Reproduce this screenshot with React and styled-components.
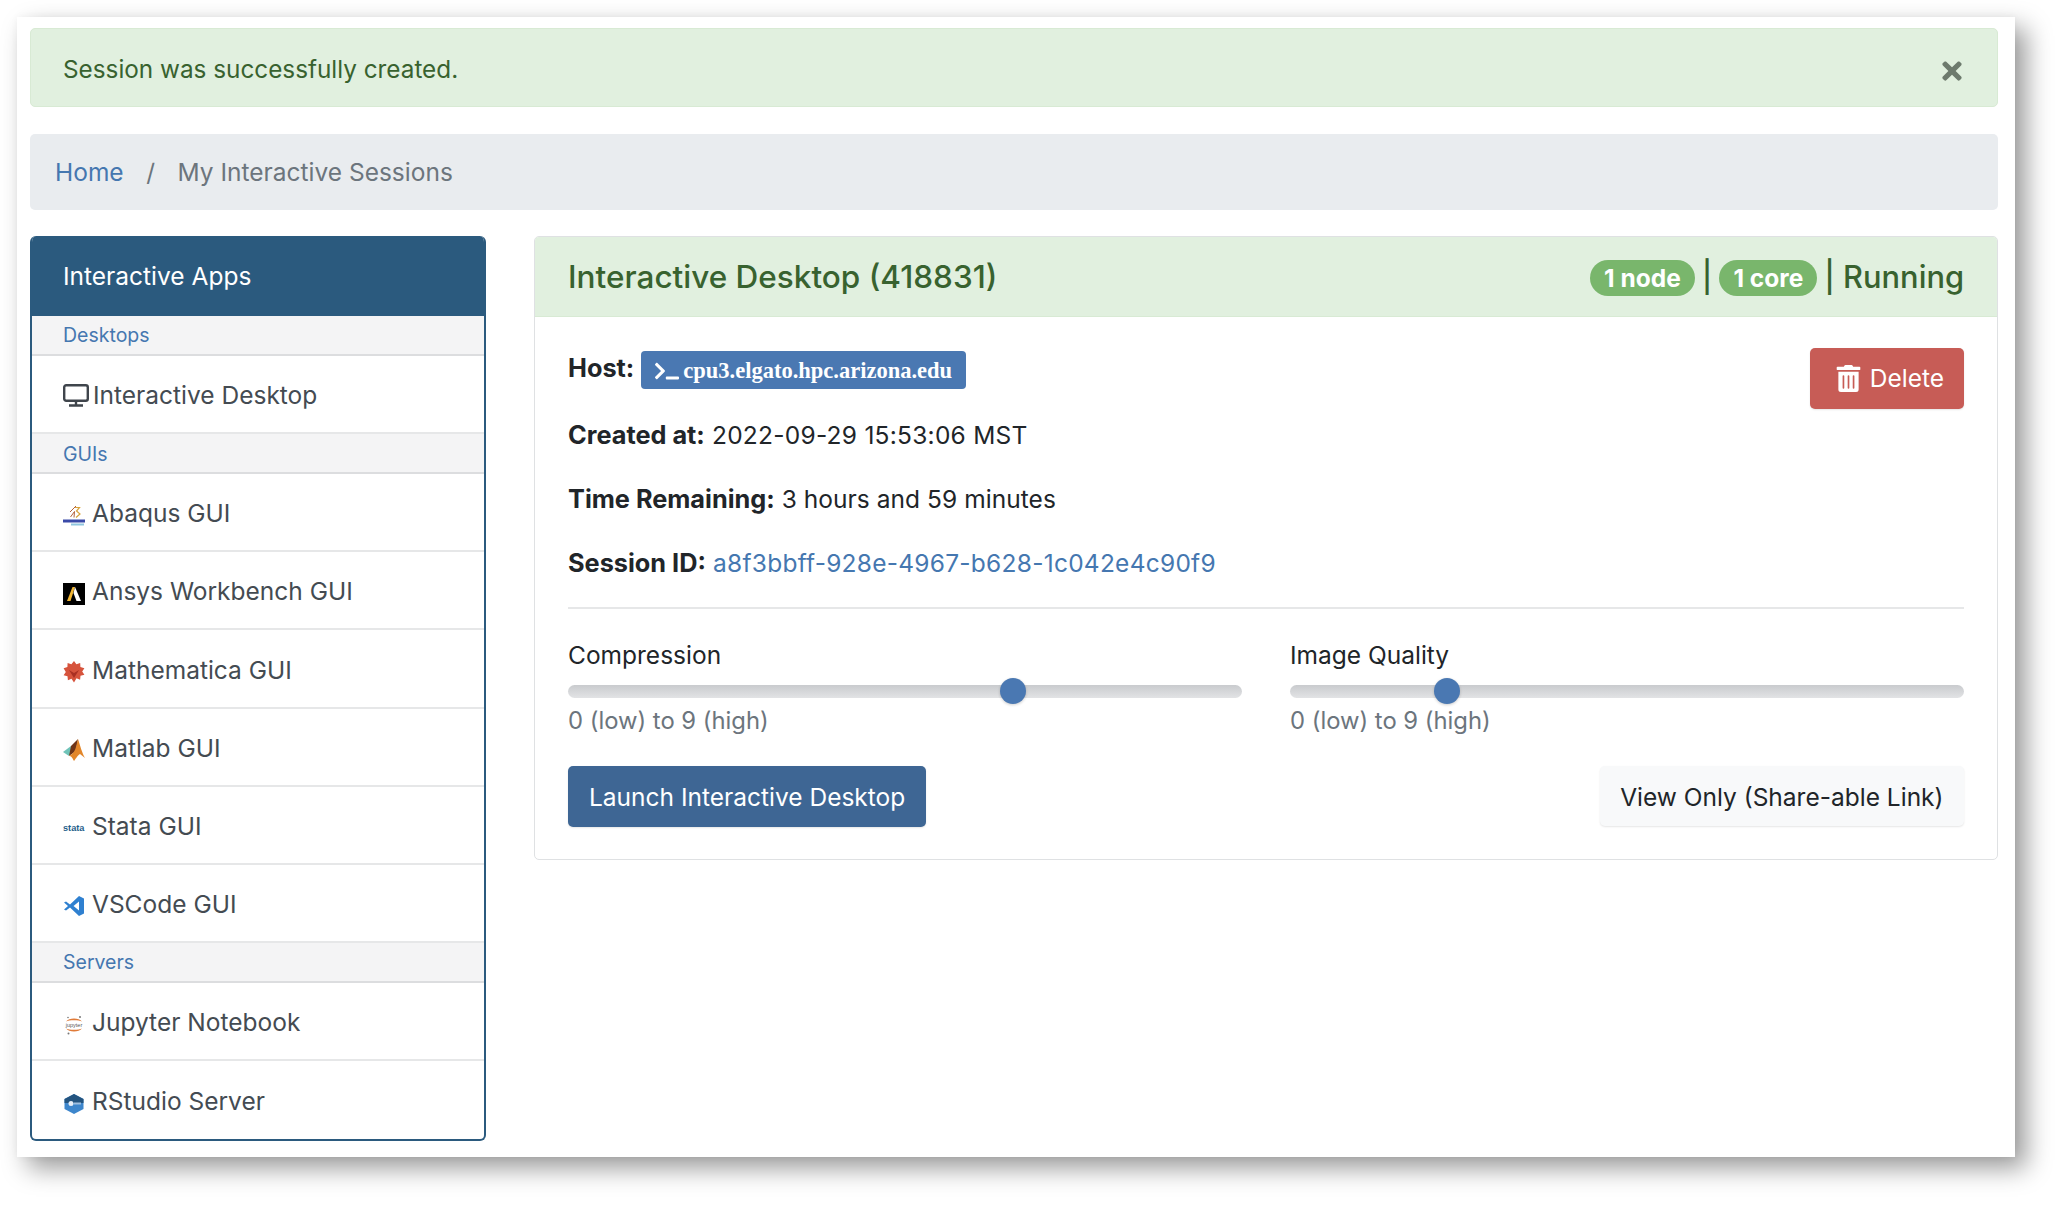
import styled, { createGlobalStyle } from "styled-components";
import { FaTimes, FaTerminal, FaTrashAlt } from "react-icons/fa";

const GlobalStyle = createGlobalStyle`
  html, body {
    margin: 0;
    padding: 0;
    background: #fff;
  }
  body {
    font-family: Inter, "Liberation Sans", sans-serif;
    font-size: 24.5px;
    line-height: 1.5;
    color: #212529;
  }
  * {
    box-sizing: border-box;
  }
`;

const DesktopIcon = () => (
  <svg width="26" height="23" viewBox="0 0 26 23" fill="none" stroke="#3f454c">
    <rect x="1.2" y="1.2" width="23.6" height="15.6" rx="2" strokeWidth="2.4" />
    <path d="M13 17v4M6 21.500h14" strokeWidth="2.400" />
  </svg>
);

const AbaqusIcon = () => (
  <svg width="22" height="22" viewBox="0 0 22 22">
    <path d="M7.500 12 L11.500 6.500 L11 12.500 M7 7 L13 1" fill="none" stroke="#b5623a" strokeWidth="1" />
    <path d="M12 2.500h4.500l-3 3.500 3.500 3-4 3.500" fill="none" stroke="#d8a23c" strokeWidth="1.200" />
    <rect x="0" y="14.500" width="22" height="3" fill="#3a4aa8" />
    <rect x="8" y="18.500" width="13" height="2" fill="#8fc6df" />
  </svg>
);

const AnsysIcon = () => (
  <svg width="22" height="22" viewBox="0 0 22 22">
    <rect width="22" height="22" fill="#000" />
    <path d="M4 18 L9.500 4 H12 L7.500 18 Z" fill="#f2b632" />
    <path d="M12 4 L18 18 H13.500 L10.500 10 Z" fill="#fff" />
  </svg>
);

const MathematicaIcon = () => (
  <svg width="22" height="22" viewBox="0 0 22 22">
    <path
      d="M11 0l2.400 3.200 3.800-1.300.2 4 4 1.300-2.200 3.300 2.200 3.300-3.900 1-.4 4-3.600-1.500L11 21.500l-2.500-3.700-3.600 1.500-.4-4L.6 14.300l2.200-3.300L.6 7.200l3.800-1.300.2-4 3.800 1.300z"
      fill="#d6533c"
    />
    <path d="M6 9l5 3 5-3-5 8z" fill="#a92f22" />
  </svg>
);

const MatlabIcon = () => (
  <svg width="22" height="22" viewBox="0 0 22 22">
    <path d="M0 13l8-6 3 3-5 7z" fill="#6fc3b8" />
    <path d="M8 7L15 0 13 12 6 17z" fill="#6e3418" />
    <path d="M15 0c2 6 4 14 7 19l-5-4c-3 2-5 6-6 7-2-4-3-5-5-5 4-2 6-5 7-9z" fill="#e2862a" />
  </svg>
);

const StataIcon = () => (
  <svg width="22" height="22" viewBox="0 0 22 22">
    <text x="0" y="14" fontFamily="Liberation Sans" fontWeight="700" fontSize="9.200" fill="#1f5f8b">
      stata
    </text>
  </svg>
);

const VSCodeIcon = () => (
  <svg width="22" height="22" viewBox="0 0 22 22">
    <path d="M16 1l5 2.500v15L16 21 7 12.500l-4 3L1 14.500 5 11 1 7.500 3 6.500l4 3z" fill="#2f80d0" />
    <path d="M16 6.500L10.500 11l5.500 4.500z" fill="#fff" />
  </svg>
);

const JupyterIcon = () => (
  <svg width="22" height="22" viewBox="0 0 22 22">
    <path d="M3 7.500c3-4 13-4 16 0-3-1.800-13-1.800-16 0zM3 14.500c3 4 13 4 16 0-3 1.800-13 1.800-16 0z" fill="#e07b39" />
    <circle cx="17" cy="3" r="1" fill="#777" />
    <circle cx="5" cy="3.500" r="0.800" fill="#777" />
    <circle cx="5.500" cy="19.500" r="1" fill="#777" />
    <text x="11" y="12.500" textAnchor="middle" fontFamily="Liberation Sans" fontSize="5.500" fill="#555">
      jupyter
    </text>
  </svg>
);

const RStudioIcon = () => (
  <svg width="22" height="22" viewBox="0 0 22 22">
    <path d="M11 1l9.500 5v10L11 21l-9.500-5V6z" fill="#3d86cc" />
    <path d="M1.500 10h19V6L11 1 1.500 6z" fill="#24547f" />
    <circle cx="8" cy="10.500" r="2.500" fill="#e6eef7" />
    <rect x="11" y="9.500" width="7" height="2" fill="#9fbfe0" />
  </svg>
);

const groups = [
  { title: "Desktops", apps: [{ name: "Interactive Desktop", icon: <DesktopIcon />, tight: true }] },
  {
    title: "GUIs",
    apps: [
      { name: "Abaqus GUI", icon: <AbaqusIcon /> },
      { name: "Ansys Workbench GUI", icon: <AnsysIcon /> },
      { name: "Mathematica GUI", icon: <MathematicaIcon /> },
      { name: "Matlab GUI", icon: <MatlabIcon /> },
      { name: "Stata GUI", icon: <StataIcon /> },
      { name: "VSCode GUI", icon: <VSCodeIcon /> },
    ],
  },
  {
    title: "Servers",
    apps: [
      { name: "Jupyter Notebook", icon: <JupyterIcon /> },
      { name: "RStudio Server", icon: <RStudioIcon /> },
    ],
  },
];

const App = () => {
  return (
    <>
      <GlobalStyle />
      <Page>
        <Window>
          <Alert>
            <span>Session was successfully created.</span>
            <CloseButton>
              <FaTimes />
            </CloseButton>
          </Alert>
          <Breadcrumb>
            <BlueLink href="#">Home</BlueLink>
            <Divider>/</Divider>
            <Current>My Interactive Sessions</Current>
          </Breadcrumb>
          <Columns>
            <Sidebar>
              <SidebarHeader>Interactive Apps</SidebarHeader>
              {groups.map((group) => (
                <div key={group.title}>
                  <SectionTitle>{group.title}</SectionTitle>
                  {group.apps.map((app) => (
                    <AppRow key={app.name} $tight={app.tight}>
                      {app.icon}
                      <span>{app.name}</span>
                    </AppRow>
                  ))}
                </div>
              ))}
            </Sidebar>
            <Panel>
              <PanelHeader>
                <span>Interactive Desktop (418831)</span>
                <Status>
                  <Pill>1 node</Pill>
                  <span>|</span>
                  <Pill>1 core</Pill>
                  <span>| Running</span>
                </Status>
              </PanelHeader>
              <PanelBody>
                <InfoTop>
                  <HostLine>
                    <b>Host:</b>
                    <HostBadge>
                      <FaTerminal />
                      cpu3.elgato.hpc.arizona.edu
                    </HostBadge>
                  </HostLine>
                  <DeleteButton>
                    <FaTrashAlt />
                    Delete
                  </DeleteButton>
                </InfoTop>
                <InfoLine $spacing="0.25px">
                  <b>Created at:</b> 2022-09-29 15:53:06 MST
                </InfoLine>
                <InfoLine $spacing="0.05px">
                  <b>Time Remaining:</b> 3 hours and 59 minutes
                </InfoLine>
                <InfoLine $spacing="0.25px">
                  <b>Session ID:</b> <BlueLink href="#">a8f3bbff-928e-4967-b628-1c042e4c90f9</BlueLink>
                </InfoLine>
                <Rule />
                <Sliders>
                  <SliderField>
                    <label>Compression</label>
                    <Range type="range" min="0" max="9" defaultValue="6" />
                    <Help>0 (low) to 9 (high)</Help>
                  </SliderField>
                  <SliderField>
                    <label>Image Quality</label>
                    <Range type="range" min="0" max="9" defaultValue="2" />
                    <Help>0 (low) to 9 (high)</Help>
                  </SliderField>
                </Sliders>
                <Actions>
                  <LaunchButton>Launch Interactive Desktop</LaunchButton>
                  <ShareButton>View Only (Share-able Link)</ShareButton>
                </Actions>
              </PanelBody>
            </Panel>
          </Columns>
        </Window>
      </Page>
    </>
  );
};

const Page = styled.div`
  height: 1205px;
  padding: 17px 48px 48px 17px;
  overflow: hidden;
`;
const Window = styled.div`
  height: 1140px;
  padding: 11px 17px 0 13px;
  background: #fff;
  box-shadow: 11px 11px 24px rgba(0, 0, 0, 0.4), 0 0 8px rgba(0, 0, 0, 0.04);
`;
const Alert = styled.div`
  height: 79px;
  padding: 3px 31px 0 32px;
  display: flex;
  align-items: center;
  justify-content: space-between;
  background: #e1f0df;
  border: 1px solid #d8ead4;
  border-radius: 5px;
  color: #38622f;
  font-size: 24.3px;
`;
const CloseButton = styled.button`
  border: none;
  background: none;
  padding: 0;
  margin-top: 3px;
  display: flex;
  font-size: 28px;
  color: #6d7a6d;
`;
const Breadcrumb = styled.nav`
  height: 76px;
  margin-top: 27px;
  padding: 1px 25px 0;
  display: flex;
  align-items: center;
  background: #e9ecef;
  border-radius: 5px;
`;
const BlueLink = styled.a`
  color: #4577b0;
  text-decoration: none;
`;
const Divider = styled.span`
  margin: 0 22.500px;
  color: #6c757d;
`;
const Current = styled.span`
  color: #6c757d;
`;
const Columns = styled.div`
  margin-top: 26px;
  display: grid;
  grid-template-columns: 456px 1fr;
  gap: 48px;
  align-items: start;
`;
const Sidebar = styled.aside`
  border: 2px solid #2b5a7e;
  border-top: none;
  border-radius: 6px;
  overflow: hidden;
`;
const SidebarHeader = styled.div`
  height: 80px;
  margin: 0 -2px;
  padding: 1px 33px 0;
  display: flex;
  align-items: center;
  background: #2b5a7e;
  color: #fff;
`;
const SectionTitle = styled.div`
  height: 40px;
  padding: 2px 31px 0;
  display: flex;
  align-items: center;
  background: #f4f4f5;
  border-bottom: 2px solid #dcdddf;
  color: #4577b0;
  font-size: 19.5px;
`;
const AppRow = styled.div`
  height: 78.150px;
  padding: 3px 31px 0;
  display: flex;
  align-items: center;
  gap: ${(props) => (props.$tight ? "4px" : "7px")};
  border-bottom: 2px solid #e6e7e8;
  color: #444b52;
  svg {
    margin-top: ${(props) => (props.$tight ? "0" : "4px")};
  }
  div:last-child > &:last-child {
    border-bottom: none;
  }
`;
const Panel = styled.section`
  height: 624px;
  border: 1px solid #dfe1e3;
  border-radius: 5px;
  overflow: hidden;
`;
const PanelHeader = styled.header`
  height: 80px;
  padding: 1px 33px 0;
  display: flex;
  align-items: center;
  justify-content: space-between;
  background: #e1f0df;
  border-bottom: 1px solid #d8ead4;
  color: #38622f;
  font-size: 31.500px;
  font-weight: 500;
`;
const Status = styled.div`
  display: flex;
  align-items: center;
  gap: 7px;
  font-size: 30.800px;
`;
const Pill = styled.span`
  height: 36px;
  margin-top: 2px;
  padding: 0 14px;
  display: flex;
  align-items: center;
  background: #79b66c;
  border-radius: 18px;
  color: #fff;
  font-size: 24.5px;
  font-weight: 700;
`;
const PanelBody = styled.div`
  padding: 31px 33px 0;
  b {
    font-size: 25.300px;
    font-weight: 700;
    letter-spacing: 0;
  }
`;
const InfoTop = styled.div`
  display: flex;
  justify-content: space-between;
  align-items: flex-start;
  height: 67px;
`;
const HostLine = styled.div`
  display: flex;
  align-items: flex-start;
  gap: 7px;
  b {
    padding-top: 1px;
  }
`;
const HostBadge = styled.span`
  height: 38px;
  margin-top: 3px;
  padding: 1px 14px 0;
  display: flex;
  align-items: center;
  gap: 4px;
  background: #4a78b2;
  border-radius: 4px;
  color: #fff;
  font-family: "Liberation Serif", serif;
  font-size: 22.5px;
  font-weight: 700;
  svg {
    font-size: 24px;
  }
`;
const DeleteButton = styled.button`
  height: 61px;
  padding: 0 20px 0 25px;
  display: flex;
  align-items: center;
  gap: 8px;
  background: #c75c56;
  border: none;
  border-radius: 5px;
  box-shadow: 0 1px 2px rgba(0, 0, 0, 0.1);
  color: #fff;
  font: inherit;
  svg {
    font-size: 27px;
  }
`;
const InfoLine = styled.p`
  margin: 0 0 25px;
  padding-top: 1px;
  height: 39px;
  letter-spacing: ${(props) => props.$spacing};
`;
const Rule = styled.hr`
  margin: 0;
  border: none;
  border-top: 2px solid #e6e7e8;
`;
const Sliders = styled.div`
  margin-top: 27px;
  display: grid;
  grid-template-columns: 1fr 1fr;
  gap: 48px;
`;
const SliderField = styled.div`
  display: flex;
  flex-direction: column;
  label {
    height: 42px;
    padding-top: 1px;
  }
`;
const Range = styled.input`
  appearance: none;
  width: 100%;
  height: 26px;
  margin: 0;
  background: transparent;
  &::-webkit-slider-runnable-track {
    height: 13px;
    border-radius: 7px;
    background: linear-gradient(180deg, #c9cbce, #e2e3e5);
  }
  &::-webkit-slider-thumb {
    appearance: none;
    width: 26px;
    height: 26px;
    margin-top: -6.500px;
    border-radius: 50%;
    background: #4a78b2;
    box-shadow: 0 1px 3px rgba(0, 0, 0, 0.2);
  }
`;
const Help = styled.div`
  margin-top: -1px;
  height: 36px;
  color: #6c757d;
  font-size: 23.800px;
`;
const Actions = styled.div`
  margin-top: 27px;
  display: flex;
  justify-content: space-between;
  align-items: flex-start;
`;
const LaunchButton = styled.button`
  height: 61px;
  padding: 2px 21px 0;
  background: #3e6694;
  border: none;
  border-radius: 5px;
  box-shadow: 0 1px 2px rgba(0, 0, 0, 0.1);
  color: #fff;
  font: inherit;
`;
const ShareButton = styled.button`
  height: 60px;
  padding: 2px 20.500px 0;
  background: #f8f9fa;
  border: none;
  border-radius: 5px;
  box-shadow: 0 1px 2px rgba(0, 0, 0, 0.1);
  color: #212529;
  font: inherit;
`;

export default App;
